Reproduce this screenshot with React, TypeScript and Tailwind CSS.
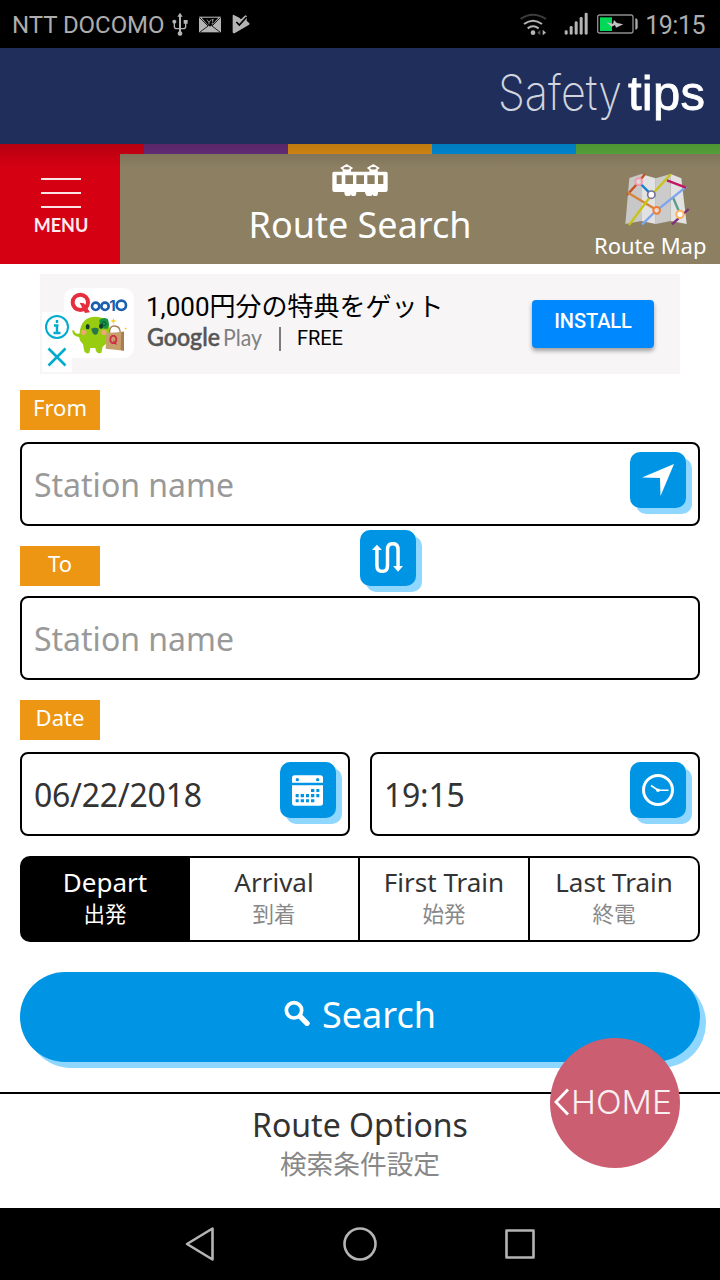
import React, { useState } from "react";
import clsx from "clsx";

const STRIPES = [
  "bg-[#d60013]",
  "bg-[#6a2e7c]",
  "bg-[#e08f14]",
  "bg-[#0090de]",
  "bg-[#5aae3c]",
];

const TIME_TYPES = [
  { id: "depart", label: "Depart", ja: "出発" },
  { id: "arrival", label: "Arrival", ja: "到着" },
  { id: "first", label: "First Train", ja: "始発" },
  { id: "last", label: "Last Train", ja: "終電" },
];

function StatusBar() {
  return (
    <div className="flex h-12 items-center bg-black pl-3 pr-[15px] font-[Roboto,sans-serif] text-[#adadad]">
      <span className="pt-[2px] text-[24px] leading-none tracking-[-0.05px]">NTT DOCOMO</span>
      <svg className="ml-2 h-6 w-4" viewBox="514 36 48 72" fill="#b4b4b4">
        <path d="M538 38l8 12h-5v34h7c4 0 5-2 5-5v-8h-4V60h12v11h-4v9c0 5-4 8-9 8h-7v6a7 7 0 11-6 0v-6h-7c-5 0-9-3-9-8v-9a6 6 0 114 0v8c0 3 1 5 5 5h7V50h-5z" />
      </svg>
      <svg className="ml-[11px] h-[17px] w-[22px]" viewBox="596 49 66 49">
        <rect x="596" y="50" width="66" height="47" fill="#b4b4b4" />
        <path d="M604 53h50l-22 26h-6z" fill="#000" />
        <path d="M597 52l26 26-25 19M661 52l-26 26 25 19" fill="none" stroke="#000" strokeWidth="2.5" />
        <path d="M620 59l6 8v6M632 59l-6 8M634 59h6M637 59v8M634 70h4" fill="none" stroke="#b4b4b4" strokeWidth="2.5" />
      </svg>
      <svg className="ml-[11px] h-5 w-[18px]" viewBox="694 43 54 60">
        <path d="M698 45l18 9 5 5 13-12 5 2-1 14 8 8q2 3-2 5l-41 24q-7 3-7-4V49q0-4 2-4z" fill="#b4b4b4" />
        <path d="M707 67l9 9 22-24" fill="none" stroke="#000" strokeWidth="5" />
      </svg>
      <div className="flex-1" />
      <svg className="h-[23px] w-[27px]" viewBox="117 37 81 69" fill="none">
        <path d="M119 55q36-26 76 0" stroke="#3d3d3d" strokeWidth="6" />
        <path d="M129 70q27-20 54 0M140 83q16-12 33 0" stroke="#b4b4b4" strokeWidth="6" />
        <circle cx="156" cy="96" r="7" fill="#b4b4b4" />
        <path d="M178 88v16l-9-8z" fill="#555" />
        <path d="M185 87v17l10-8z" fill="#b4b4b4" />
      </svg>
      <svg className="ml-[17px] h-6 w-6" viewBox="250 36 72 72" fill="#b4b4b4">
        <rect x="252" y="91" width="9" height="13" rx="4" />
        <rect x="267" y="78" width="9" height="26" rx="4" />
        <rect x="282" y="64" width="9" height="40" rx="4" />
        <rect x="297" y="51" width="9" height="53" rx="4" />
        <rect x="312" y="38" width="9" height="66" rx="4" />
      </svg>
      <svg className="ml-[9px] h-5 w-[41px]" viewBox="351 41 123 60">
        <rect x="353" y="44" width="106" height="54" rx="6" fill="none" stroke="#8d8d8d" strokeWidth="4" />
        <rect x="360" y="51" width="36" height="41" fill="#00d958" />
        <path d="M466 54q7 0 7 7v20q0 7-7 7z" fill="#adadad" />
        <path d="M379 66l20 4 3-11 9 9 19 4-22 10-3-8-10 5z" fill="#c2c2c2" />
      </svg>
      <span className="ml-[7px] pt-[2px] text-[25px] leading-none tracking-[-0.5px]">19:15</span>
    </div>
  );
}

function Header() {
  return (
    <div className="flex h-24 justify-end bg-[#202e5b]">
      <svg className="h-24 w-[224px]" viewBox="496 48 224 96" fill="#fff">
        <text x="498" y="109.500" textLength="124" lengthAdjust="spacingAndGlyphs" className="font-[Inter,sans-serif] text-[49px] font-extralight" opacity="0.8">Safety</text>
        <text x="628" y="109.500" textLength="77" className="font-['Liberation_Sans',sans-serif] text-[49px]" stroke="#fff" strokeWidth="0.8">tips</text>
      </svg>
    </div>
  );
}

function TrainIcon() {
  return (
    <svg className="h-[34px] w-14" viewBox="276 69 168 102" fill="#fff">
      <path
        fillRule="evenodd"
        d="M282 95h156q5 0 5 5v50q0 6-6 6h-23q0 12-5 12h-7q-4 0-4-5-2 5-5 5h-10q-6 0-8-12h-26q0 12-5 12h-7q-4 0-4-5-2 5-5 5h-8q-7 0-7-12h-30q-6 0-6-6v-50q0-5 5-5zM290 106v26h15v-26zM316 106v26h23v-26zM349 106v26h23v-26zM382 106v26h22v-26zM414 106v26h16v-26z"
      />
      <path d="M305 84l15-9 15 9-9 7h-12zM385 84l15-9 15 9-9 7h-12z" fill="none" stroke="#fff" strokeWidth="5" />
      <path d="M308 90h25v7h-25zM388 90h25v7h-25z" />
    </svg>
  );
}

function MapIcon() {
  return (
    <svg className="h-[55px] w-[67px]" viewBox="156 96 201 165" fill="none">
      <path d="M175 114l36-12v141l-48 9z" fill="#c8c8c8" />
      <path d="M211 102l43 13v137l-43-9z" fill="#e2e2e2" />
      <path d="M254 115l45-13v141l-45 9z" fill="#cbcbcb" />
      <path d="M299 102l32 13 16 137-48-9z" fill="#e2e2e2" />
      <g strokeWidth="7">
        <path d="M222 102l-24 30-30 33" stroke="#c8501e" />
        <path d="M171 158l86 52" stroke="#d5853a" />
        <path d="M203 126l38 38" stroke="#1480c8" />
        <path d="M299 103L241 166 174 255" stroke="#c9c414" />
        <path d="M346 140l-95 76-38 38" stroke="#7ea4f0" />
        <path d="M288 121l57 22" stroke="#c01863" />
        <path d="M307 175l20 46" stroke="#5b9c8a" />
        <path d="M353 207l-50 46" stroke="#7d2d78" />
      </g>
      <circle cx="203" cy="125" r="10" fill="#ded8da" stroke="#f09cab" strokeWidth="6" />
      <circle cx="241" cy="164" r="11" fill="#fff" stroke="#77719a" strokeWidth="5" />
      <circle cx="257" cy="211" r="10" fill="#e8ddd5" stroke="#ee7d36" strokeWidth="6" />
      <circle cx="327" cy="223" r="11" fill="#fff" stroke="#fdb35c" strokeWidth="6" />
    </svg>
  );
}

function TitleBar() {
  return (
    <div className="relative">
      <div className="flex h-2.5">
        {STRIPES.map(c => (
          <div key={c} className={clsx("flex-1", c)} />
        ))}
      </div>
      <div className="flex h-[110px] bg-[#8c7f62] text-white">
        <button className="flex w-[120px] flex-col items-center bg-[#d60013]">
          <span className="ml-0.5 mt-6 flex flex-col gap-3">
            <span className="h-0.5 w-10 bg-[#fbe4e6]" />
            <span className="h-0.5 w-10 bg-[#fbe4e6]" />
            <span className="h-0.5 w-10 bg-[#fbe4e6]" />
          </span>
          <span className="ml-0.5 mt-[5px] font-[Lato,sans-serif] text-[18px] font-bold leading-6 text-[#fdecee]">MENU</span>
        </button>
        <div className="flex w-[480px] flex-col items-center pt-[9px]">
          <TrainIcon />
          <h1 className="mt-[3px] text-[36px] leading-[50px]">Route Search</h1>
        </div>
        <button className="flex w-[120px] flex-col items-end pr-[13.5px] pt-[18px]">
          <span className="mr-[17px]">
            <MapIcon />
          </span>
          <span className="mt-[3px] whitespace-nowrap text-[22px] leading-[30px]">Route Map</span>
        </button>
      </div>
      {/* shadow cast by the header */}
      <div className="absolute inset-x-0 top-0 h-6 bg-gradient-to-b from-black/15 to-transparent" />
    </div>
  );
}

function QooIcon() {
  return (
    <svg className="size-[70px]" viewBox="102 69 210 210">
      <rect x="102" y="69" width="210" height="210" rx="32" fill="#fff" />
      <circle cx="151" cy="112" r="23" fill="none" stroke="#e62e3c" strokeWidth="12" />
      <path d="M149 113l13 2 18 27-15 2z" fill="#e62e3c" />
      <g fill="none" stroke="#1c5fae" strokeWidth="8">
        <circle cx="197" cy="124" r="11" />
        <circle cx="225" cy="124" r="11" />
        <circle cx="274" cy="121" r="14" />
      </g>
      <text x="238" y="138" className="fill-[#1c5fae] font-[Inter,sans-serif] text-[45px] font-bold">1</text>
      <path d="M127 198q2-6 6 1 5 11 16 6 3-50 49-50 44 2 42 50-2 28-22 40l-4 18q-10 6-16-5l-2-9h-15l-3 14q-9 6-15-4l-4-21q-11-11-12-22-20-3-20-18z" fill="#98cc10" />
      <path d="M208 165q12-10 25-3 8 15 0 29-17 2-23-6z" fill="#179348" />
      <circle cx="222" cy="176" r="6" fill="none" stroke="#0d5228" strokeWidth="3" />
      <ellipse cx="173" cy="185" rx="6" ry="8" fill="#163d26" />
      <ellipse cx="213" cy="184" rx="6" ry="8" fill="#163d26" />
      <circle cx="161" cy="202" r="8" fill="#f1a678" />
      <circle cx="222" cy="202" r="8" fill="#f1a678" />
      <path d="M184 191q11-5 22 0-1 18-10 18-10-1-12-18z" fill="#28764a" />
      <path d="M239 203q-1-20 14-20 17 0 18 20" fill="none" stroke="#a67e51" strokeWidth="4" />
      <path d="M229 204l53-4v57l-55-6z" fill="#c6a06c" />
      <path d="M274 200l8 0v57l-10-2z" fill="#a97d4e" />
      <text x="237" y="238" className="fill-[#d02a42] font-[Inter,sans-serif] text-[34px] font-bold">Q</text>
      <path d="M250 158l2 7 8 3-8 3-2 8-2-8-7-3 7-3zM287 186l1 3 4 1-4 2-1 3-1-3-4-2 4-1z" fill="#f5cf28" />
    </svg>
  );
}

function AdBanner() {
  return (
    <div className="relative mx-5 flex h-[100px] bg-[#f7f5f6] pl-6">
      <div className="mt-3.5">
        <QooIcon />
      </div>
      <div className="absolute left-0.5 top-[38px] flex h-[60px] w-[30px] flex-col items-center gap-2 bg-white/90 pt-[3px]">
        <svg className="size-6" viewBox="0 0 24 24" fill="none" stroke="#00abcd">
          <circle cx="12" cy="12" r="11" strokeWidth="2" />
          <path d="M9 10.500h4.500M12 10v8M8.500 18h7M12 5v3" strokeWidth="2.4" />
        </svg>
        <svg className="size-5" viewBox="0 0 20 20" fill="none" stroke="#00abcd" strokeWidth="2.6">
          <path d="M1.5 1.5l17 17M18.5 1.5l-17 17" />
        </svg>
      </div>
      <div className="ml-[12px] w-[386px] pt-[15px]">
        <div className="whitespace-nowrap font-[Roboto,'Noto_Sans_CJK_JP',sans-serif] text-[26px] leading-9 text-black">1,000円分の特典をゲット</div>
        <div className="-mt-px ml-px flex h-7 items-center">
          <svg className="h-9 w-[116px] overflow-visible" viewBox="0 0 116 36">
            <text x="0" y="26" textLength="73" lengthAdjust="spacingAndGlyphs" className="fill-[#555] font-[Lato,sans-serif] text-[24px] font-medium" stroke="#555" strokeWidth="0.500">Google</text>
            <text x="76" y="26" textLength="39" lengthAdjust="spacingAndGlyphs" className="fill-[#808080] font-[Lato,sans-serif] text-[24px]">Play</text>
          </svg>
          <span className="ml-4 mt-0.5 h-6 w-0.5 bg-[#7c7c7c]" />
          <span className="ml-4 font-[Roboto,sans-serif] text-xl leading-6 tracking-[-0.1px] text-black">FREE</span>
        </div>
      </div>
      <button className="mt-[26px] h-12 w-[122px] rounded bg-[#0088ff] pb-[6px] font-[Roboto,sans-serif] text-xl font-medium leading-none tracking-[-0.1px] text-white shadow-[0_3px_4px_rgba(0,0,0,0.35)]">
        INSTALL
      </button>
    </div>
  );
}

function Tag({ children }: { children: React.ReactNode }) {
  return (
    <div className="h-10 w-20 bg-[#ec9613] text-center text-[22px] leading-[35px] text-white">{children}</div>
  );
}

function IconButton({ children }: { children: React.ReactNode }) {
  return (
    <button className="flex size-14 items-center justify-center rounded-[10px] bg-[#0095e4] shadow-[6px_6px_0_#8fd7ff]">
      {children}
    </button>
  );
}

interface FieldProps {
  value?: string;
  placeholder?: string;
  children?: React.ReactNode;
}

function Field({ value, placeholder, children }: FieldProps) {
  return (
    <div className="flex h-[84px] min-w-0 flex-1 items-start justify-between rounded-lg border-2 border-black pl-3 pr-3 pt-2">
      <span className={clsx("text-[32px] leading-[65px]", value ? "tracking-[-0.25px] text-[#333]" : "text-[#999]")}>
        {value || placeholder}
      </span>
      {children}
    </div>
  );
}

function CalendarIcon() {
  return (
    <svg className="-ml-px size-[31px]" viewBox="96 104 93 91">
      <path d="M96 112q0-8 8-8h77q8 0 8 8v14H96zM96 134h93v53q0 8-8 8h-77q-8 0-8-8z" fill="#fff" />
      <g fill="#0095e4">
        <circle cx="112" cy="117" r="5" />
        <circle cx="173" cy="117" r="5" />
        <path d="M153 145h10v9h-10zM169 145h9v9h-9zM107 160h9v10h-9zM122 160h10v10h-10zM138 160h9v10h-9zM153 160h10v10h-10zM169 160h9v10h-9zM107 176h9v9h-9zM122 176h10v9h-10zM138 176h9v9h-9zM153 176h10v9h-10z" />
      </g>
    </svg>
  );
}

function ClockIcon() {
  return (
    <svg className="size-8" viewBox="0 0 32 32" fill="none" stroke="#fff">
      <circle cx="16" cy="16" r="14.5" strokeWidth="3" />
      <path d="M9 11.5l7 4.7h10.5" strokeWidth="1.6" />
      <circle cx="16" cy="16.2" r="1.8" fill="#fff" stroke="none" />
    </svg>
  );
}

export default function App() {
  const [timeType, setTimeType] = useState("depart");

  return (
    <div className="relative flex h-[1280px] w-[720px] flex-col overflow-hidden bg-white font-['Noto_Sans','Noto_Sans_CJK_JP',sans-serif]">
      <StatusBar />
      <Header />
      <TitleBar />

      <div className="flex flex-col px-5 pt-2.5">
        <AdBanner />

        <div className="mt-4 flex flex-col">
          <Tag>From</Tag>
          <div className="mt-3 flex">
            <Field placeholder="Station name">
              <IconButton>
                <svg className="h-8 w-8" viewBox="0 0 32 32" fill="#fff">
                  <path d="M32 0L18.5 32 18 14 0 13.5z" />
                </svg>
              </IconButton>
            </Field>
          </div>
        </div>

        <div className="mt-1 flex h-[66px] items-start">
          <div className="mt-4">
            <Tag>To</Tag>
          </div>
          <div className="ml-[260px]">
            <IconButton>
              <svg className="-mt-px mr-px h-[31px] w-[31px]" viewBox="97 336 94 94">
                <path d="M112 357v50q0 18 16 18t16-18v-48q0-18 16-18t16 18v52" fill="none" stroke="#fff" strokeWidth="10.5" />
                <path d="M97 360l15-16 15 16zM161 409h30l-15 17z" fill="#fff" />
              </svg>
            </IconButton>
          </div>
        </div>
        <div className="flex">
          <Field placeholder="Station name" />
        </div>

        <div className="mt-5">
          <Tag>Date</Tag>
        </div>
        <div className="mt-3 flex gap-5">
          <Field value="06/22/2018">
            <IconButton>
              <CalendarIcon />
            </IconButton>
          </Field>
          <Field value="19:15">
            <IconButton>
              <ClockIcon />
            </IconButton>
          </Field>
        </div>

        <div className="mt-5 flex h-[86px]">
          {TIME_TYPES.map(t => (
            <button
              key={t.id}
              onClick={() => setTimeType(t.id)}
              className={clsx(
                "flex w-[170px] flex-col items-center border-y-2 border-r-2 border-black pt-[6px] first:rounded-l-[10px] first:border-l-2 last:rounded-r-[10px]",
                timeType === t.id ? "bg-black text-white" : "text-[#333]"
              )}
            >
              <span className="text-[26px] leading-[36px]">{t.label}</span>
              <span className={clsx("mt-px text-[21.5px] leading-[26px]", timeType !== t.id && "text-[#888]")}>{t.ja}</span>
            </button>
          ))}
        </div>

        <button className="mt-[30px] flex h-[90px] items-center justify-center rounded-full bg-[#0095e4] pb-1 text-[36px] leading-none text-white shadow-[6px_6px_0_#8fd7ff]">
          <svg className="mb-1 mr-3 size-[26px]" viewBox="853 482 78 78" fill="none" stroke="#fff">
            <circle cx="883" cy="513" r="23" strokeWidth="11" />
            <path d="M902 532l20 20" strokeWidth="16" strokeLinecap="round" />
          </svg>
          Search
        </button>
      </div>

      <div className="mt-[30px] flex h-[116px] flex-col items-center border-t-2 border-black pt-[9px]">
        <span className="text-[32px] leading-[44px] text-[#333]">Route Options</span>
        <span className="-mt-px text-[26.7px] leading-9 text-[#888]">検索条件設定</span>
      </div>

      <button className="absolute left-[550px] top-[1038px] flex size-[130px] items-center rounded-full bg-[#cb5f71]">
        <svg className="h-[60px] w-[130px]" viewBox="0 -10 130 60" fill="none">
          <path d="M18 6.5L6 19l12 12.5" stroke="#fff" strokeWidth="2.8" />
          <text x="21" y="31" textLength="101" lengthAdjust="spacingAndGlyphs" className="fill-white font-[Inter,sans-serif] text-[33px] font-light" opacity="0.9">HOME</text>
        </svg>
      </button>

      <div className="flex h-[72px] bg-black">
        <svg className="h-[72px] w-full" viewBox="0 0 720 72" fill="none" stroke="#b4b4b4" strokeWidth="2.6" strokeLinejoin="round">
          <path d="M187 36l25.5-15.5v31z" />
          <circle cx="360" cy="36" r="15.5" />
          <rect x="506.500" y="22.500" width="27" height="27" />
        </svg>
      </div>
    </div>
  );
}
